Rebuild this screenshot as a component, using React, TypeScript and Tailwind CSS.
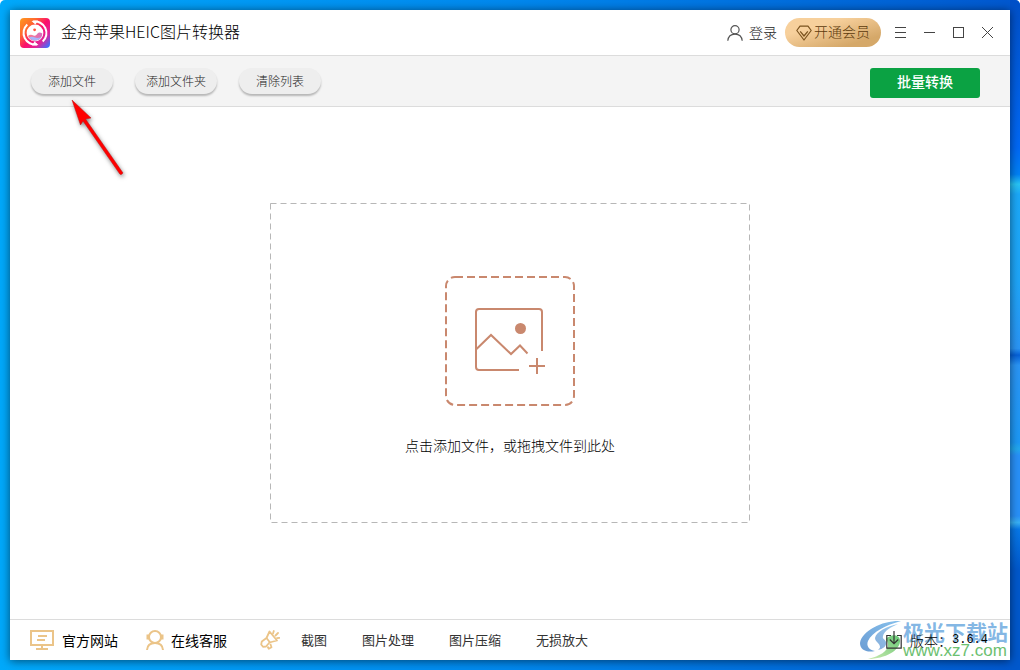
import type { ReactNode } from 'react';

const toolbarButtons = ['添加文件', '添加文件夹', '清除列表'];
const toolLinks = ['截图', '图片处理', '图片压缩', '无损放大'];

function AppLogo() {
  return (
    <svg className="w-[30px] h-[30px]" viewBox="0 0 30 30" fill="none">
      <defs>
        <linearGradient id="logoBase" x1="0" y1="0" x2="1" y2="0.9">
          <stop offset="0" stopColor="#ff9a1f" />
          <stop offset="0.3" stopColor="#ff6a2e" />
          <stop offset="0.55" stopColor="#fb0f6c" />
          <stop offset="0.78" stopColor="#e0249a" />
          <stop offset="1" stopColor="#3f6dff" />
        </linearGradient>
        <linearGradient id="logoWave" x1="0" y1="0" x2="1" y2="0">
          <stop offset="0" stopColor="#ff7d8c" />
          <stop offset="1" stopColor="#d66bc0" />
        </linearGradient>
      </defs>
      <rect width="30" height="30" rx="4" fill="url(#logoBase)" />
      <path d="M17 26.4A11.6 11.6 0 0 1 7.3 6.4M13 3.6A11.6 11.6 0 0 1 22.7 23.6" stroke="#fff" strokeWidth="2" />
      <path d="M11.5 3l6.5-.6-2.6 4.200zM18.500 27l-6.500.6 2.600-4.200z" fill="#fff" />
      <circle cx="15" cy="15" r="8.400" fill="#fff" />
      <path d="M8 18c1.500-1.500 3.500-1.500 5.500-.5s3-.5 4-2 3-1.500 4.800 0A7.400 7.400 0 0 1 8 18z" fill="url(#logoWave)" />
      <path d="M9 19.500c2-1 4-.8 6 0s4 .6 6.300-.5A7.400 7.400 0 0 1 9 19.500z" fill="#a9b4fa" />
      <circle cx="14.600" cy="11.800" r="1.400" fill="#ff5340" />
    </svg>
  );
}

function UserIcon() {
  return (
    <svg className="w-4 h-4" viewBox="0 0 16 16" fill="none" stroke="#555" strokeWidth="1.200">
      <circle cx="8" cy="4.800" r="4.100" />
      <path d="M.8 15.800c.4-4 3.200-6.600 7.200-6.600s6.800 2.600 7.200 6.600" />
    </svg>
  );
}

function DiamondIcon() {
  return (
    <svg className="w-4 h-4" viewBox="0 0 16 16" fill="none" stroke="#7b531e" strokeWidth="1.200" strokeLinejoin="round">
      <path d="M4 1.200h8l3.200 4.300L8 15 .8 5.500z" />
      <path d="M4.200 6.400L8 11l3.800-4.600" />
    </svg>
  );
}

function WindowButton({ label, children }: { label: string; children: ReactNode }) {
  return (
    <button aria-label={label} className="w-[29px] h-[29px] flex items-center justify-center hover:bg-gray-100">
      <svg className="w-[13px] h-[13px]" viewBox="0 0 13 13" fill="none" stroke="#444" strokeWidth="1">
        {children}
      </svg>
    </button>
  );
}

function TitleBar() {
  return (
    <header className="h-[46px] shrink-0 flex items-center pl-2.5 pr-2 border-b border-[#dcdcdc]">
      <AppLogo />
      <h1 className="ml-[11px] pb-1 text-base leading-5 text-black">金舟苹果HEIC图片转换器</h1>
      <div className="ml-auto flex items-center">
        <button className="flex items-center gap-1.5 text-sm leading-5 text-[#222]">
          <UserIcon />
          <span className="pb-0.5">登录</span>
        </button>
        <button className="ml-2 mr-[5px] h-[29px] w-24 flex items-center justify-center gap-0.5 rounded-full bg-linear-to-br from-[#f7d09c] from-30% to-[#d5a869] to-80% text-sm leading-5 text-[#5c3a0c]">
          <DiamondIcon />
          <span className="pb-1">开通会员</span>
        </button>
        <WindowButton label="菜单">
          <path d="M1 1.500h11M1 6.500h11M1 11.500h11" />
        </WindowButton>
        <WindowButton label="最小化">
          <path d="M1 6.500h11" />
        </WindowButton>
        <WindowButton label="最大化">
          <rect x="1.500" y="1.500" width="10" height="10" />
        </WindowButton>
        <WindowButton label="关闭">
          <path d="M1 1l11 11M12 1L1 12" />
        </WindowButton>
      </div>
    </header>
  );
}

function Toolbar() {
  return (
    <div className="relative h-[51px] shrink-0 flex items-start gap-[22px] pt-3 pl-[21px] pr-[30px] bg-[#f4f4f4] border-b border-[#dcdcdc]">
      {toolbarButtons.map((label) => (
        <button
          key={label}
          className="w-[82px] h-[26px] rounded-full bg-[#eee] text-xs leading-4 text-[#222] shadow-[0_2px_2px_rgba(0,0,0,0.25)] hover:bg-[#e6e6e6]"
        >
          {label}
        </button>
      ))}
      <button className="ml-auto w-[110px] h-[30px] pb-1 rounded-[3px] bg-[#0ba243] text-sm leading-5 font-medium text-white hover:bg-[#099039]">
        批量转换
      </button>
      {/* pointer to the add button */}
      <svg
        className="absolute left-[60px] top-[42px] w-[60px] h-[84px] pointer-events-none drop-shadow-[1px_2px_2px_rgba(0,0,0,0.5)]"
        viewBox="0 0 60 84"
      >
        <path d="M2 2l19 18-5.500 1L53 75l-2 1.700-1.200-.7L13 23l-2.500 4z" fill="#f00" stroke="#c01010" strokeWidth=".5" />
      </svg>
    </div>
  );
}

function AddImageIcon() {
  return (
    <svg className="w-[130px] h-[130px]" viewBox="0 0 130 130" fill="none" stroke="#c9886e" strokeWidth="2">
      <rect x="1" y="1" width="128" height="128" rx="9" strokeDasharray="8 4" />
      <path d="M74 94H34a3 3 0 0 1-3-3V36a3 3 0 0 1 3-3h60a3 3 0 0 1 3 3v39" />
      <path d="M31 73.500L46 59l20 19 9-8.500 7.500 8" />
      <circle cx="75.500" cy="52.500" r="5.500" fill="#c9886e" stroke="none" />
      <path d="M84 90h16M92 82v16" />
    </svg>
  );
}

function DropZone() {
  return (
    <main className="flex-1 flex items-center justify-center bg-white">
      <button className="relative w-[480px] h-[320px] flex flex-col items-center justify-start pt-[73px] gap-[29px]">
        <svg className="absolute inset-0 w-full h-full" fill="none" stroke="#b7b7b7">
          <rect x=".5" y=".5" width="479" height="319" strokeDasharray="6 4" />
        </svg>
        <AddImageIcon />
        <span className="text-sm leading-5 text-black">点击添加文件，或拖拽文件到此处</span>
      </button>
    </main>
  );
}

function MonitorIcon() {
  return (
    <svg className="w-6 h-5" viewBox="0 0 24 20" fill="none" stroke="#ebc488" strokeWidth="2">
      <path d="M1 1h22v14H1zM12 15v4M6 19h12M8 6h9M7 10h8" />
    </svg>
  );
}

function SupportIcon() {
  return (
    <svg className="w-5 h-5" viewBox="0 0 20 20" fill="none" stroke="#ebc488" strokeWidth="2">
      <circle cx="10" cy="7" r="6" />
      <path d="M3 4.500v5M17 4.500v5" strokeWidth="3" />
      <path d="M2 20c.3-4.500 3.500-7 8-7s7.700 2.500 8 7" />
    </svg>
  );
}

function MegaphoneIcon() {
  return (
    <svg className="w-5 h-5" viewBox="0 0 20 20" fill="none" stroke="#ebc488" strokeWidth="1.800" strokeLinejoin="round">
      <path d="M9.500 1.500l7.500 9-7.500 2-3.500 4-3 .3-1.800-2.300.6-3L6.500 8z" />
      <path d="M6.500 8l3.500 4.500M7.500 16.500l1.300 2.300 2.700-1.500-1.200-3.500" />
      <path d="M13 3.500l.8-2.500M15.500 5.500l2.500-2.500M17 8.200l2.300-.4" strokeLinecap="round" />
    </svg>
  );
}

function Watermark() {
  return (
    <div className="absolute right-0.5 bottom-0 flex items-end pointer-events-none">
      <svg className="w-[44px] h-10" viewBox="0 0 44 40" fill="none">
        <defs>
          <linearGradient id="swooshBlue" x1="1" y1="0" x2="0" y2="1">
            <stop offset="0" stopColor="#79b9ea" />
            <stop offset="1" stopColor="#5b92cf" />
          </linearGradient>
          <linearGradient id="swooshGreen" x1="1" y1="0" x2="0" y2="1">
            <stop offset="0" stopColor="#55c265" />
            <stop offset="0.5" stopColor="#8fd486" />
            <stop offset="1" stopColor="#c5e8a8" />
          </linearGradient>
        </defs>
        <path d="M42 1C25 0 3 10 1 23c0 7 7 10 15 8-6-1-9-5-7-10C13 12 27 5 42 1z" fill="url(#swooshBlue)" opacity=".9" />
        <path d="M39 4C28 6 17 12 16 18c0 4 5 5 5 9 0 1-1 2-2 3 5-1 9-4 8-8-1-3-4-3-3-6 1-5 8-9 15-12z" fill="url(#swooshBlue)" opacity=".75" />
        <path d="M27 19c5-5 13-5 14 1 1 10-15 19-32 19 12-3 20-8 20-14 0-3-1-4-2-6z" fill="url(#swooshGreen)" opacity=".9" />
      </svg>
      <div className="flex flex-col items-start">
        <span className="text-[21px] leading-[22px] font-bold text-[#5b9fdc]/75">极光下载站</span>
        <span className="font-['Liberation_Sans'] text-[17px] leading-[18px] text-[#6cc070]">www.xz7.com</span>
      </div>
    </div>
  );
}

function Footer() {
  return (
    <footer className="relative h-[41px] shrink-0 flex items-center pl-5 pr-[22px] bg-white border-t border-[#dcdcdc] font-normal text-black">
      <a href="#site" className="flex items-center gap-2 text-sm leading-5">
        <MonitorIcon />
        官方网站
      </a>
      <a href="#support" className="ml-[27px] flex items-center gap-1.5 text-sm leading-5">
        <SupportIcon />
        在线客服
      </a>
      <div className="ml-[33px] mr-[21px]">
        <MegaphoneIcon />
      </div>
      <nav className="flex gap-[35px] text-[13px] leading-5 text-[#333]">
        {toolLinks.map((label) => (
          <a key={label} href="#tools">
            {label}
          </a>
        ))}
      </nav>
      <Watermark />
      <div className="relative ml-auto flex items-center text-sm leading-5 font-light">
        <svg className="w-4 h-[18px] mr-2" viewBox="0 0 16 18" fill="none" stroke="#333" strokeWidth="1.200">
          <path d="M5 4.500H.8v12.700h14.400V4.500H11" />
          <path d="M8 0v12.500M3.800 8.500L8 12.700l4.200-4.200" />
        </svg>
        版本：
        <span className="font-['Liberation_Mono'] text-xs leading-5">3.6.4</span>
      </div>
    </footer>
  );
}

export default function App() {
  return (
    <div className="relative min-h-screen flex p-2.5 rounded-t-[5px] overflow-hidden bg-linear-to-r from-[#00a9fb] via-[#0088ee] via-50% to-[#0057cf] font-['Noto_Sans_CJK_SC',sans-serif] font-light">
      {/* wallpaper light beams at the right edge */}
      <div className="absolute inset-y-0 right-0 w-2.5 bg-[linear-gradient(#0050c8_0%,#0068f5_22%,#0080f5_26%,#28c4f5_27.500%,#1ba8f8_29%,#1ea5f8_42%,#2a95f5_52%,#0560d8_53%,#2a95f5_54.500%,#1c98f5_66%,#22a8ee_67%,#2890f8_68%,#2890f8_77%,#38b0f5_78%,#0878e8_79%,#0058cc_85%,#0058cc_100%)]" />
      <div className="relative flex-1 flex flex-col bg-white shadow-[0_1px_9px_rgba(0,0,0,0.55)]">
        <TitleBar />
        <Toolbar />
        <DropZone />
        <Footer />
      </div>
    </div>
  );
}
